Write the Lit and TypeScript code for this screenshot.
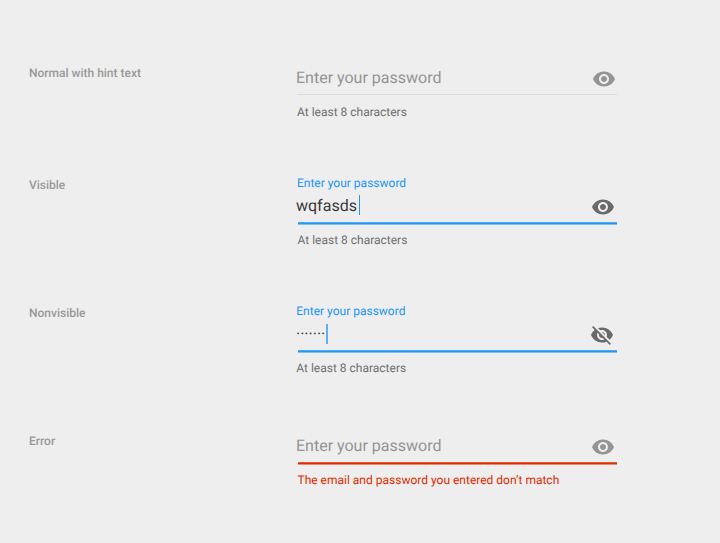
import { LitElement, html, css, svg, nothing } from "lit";
import { customElement, property } from "lit/decorators.js";
import { classMap } from "lit/directives/class-map.js";

const EYE = "M12 4.5C7 4.5 2.73 7.61 1 12c1.73 4.39 6 7.5 11 7.5s9.27-3.11 11-7.5c-1.73-4.39-6-7.5-11-7.5zM12 17c-2.76 0-5-2.24-5-5s2.24-5 5-5 5 2.24 5 5-2.24 5-5 5zm0-8c-1.66 0-3 1.34-3 3s1.34 3 3 3 3-1.34 3-3-1.34-3-3-3z";
const EYE_OFF = "M12 7c2.76 0 5 2.24 5 5 0 .65-.13 1.26-.36 1.83l2.92 2.92c1.51-1.26 2.7-2.89 3.43-4.75-1.73-4.39-6-7.5-11-7.5-1.4 0-2.74.25-3.98.7l2.16 2.16C10.74 7.13 11.35 7 12 7zM2 4.27l2.28 2.28.46.46C3.08 8.3 1.78 10.02 1 12c1.73 4.39 6 7.5 11 7.5 1.55 0 3.03-.3 4.38-.84l.42.42L19.73 22 21 20.73 3.27 3 2 4.27zM7.53 9.8l1.55 1.55c-.05.21-.08.43-.08.65 0 1.66 1.34 3 3 3 .22 0 .44-.03.65-.08l1.55 1.55c-.67.33-1.41.53-2.2.53-2.76 0-5-2.24-5-5 0-.79.2-1.53.53-2.2zm4.31-.78l3.15 3.15.02-.16c0-1.66-1.34-3-3-3l-.17.01z";

@customElement("password-field")
export class PasswordField extends LitElement {
  @property() variant = "normal";

  static styles = css`
    :host { display: block; }
    .field { width: 321px; color: #707070; text-rendering: geometricPrecision; }
    .label, .help { font-size: 12px; line-height: 16px; white-space: nowrap; padding-left: 1px; }
    .label { color: #2196f3; height: 17px; }
    .row { display: flex; justify-content: space-between; height: 30px; }
    .value { display: flex; font-size: 16px; line-height: 22px; padding-top: 3px; color: #949494; }
    .icon { width: 24px; height: 24px; fill: #949494; margin: 3px 1.5px 0 0; }
    .line { height: 1px; background: #d8d8d8; margin-left: 1px; }
    .help { margin-top: 9px; }
    .active .line, .error .line { height: 1px; margin-left: 2px; background: #2196f3; border: solid #7cc0f5; border-width: 1px 0; }
    .active .line { border-top-color: #4dabf5; }
    .active .value { color: #383838; }
    .active .icon { fill: #6a6a6a; margin-right: 2.5px; }
    .active .help, .error .help { margin-top: 7px; }
    .visible .help, .error .help { padding-left: 1.5px; }
    .masked .label, .masked .help { padding-left: 0.3px; }
    .masked .icon { margin-right: 3.3px; }
    .caret { width: 1px; height: 20px; background: #2196f3; margin: 0 0 0 2px; }
    .masked .caret { width: 2px; background: #5cb0f3; margin: 1px 0 0 1px; }
    .error .line { background: #dd2c00; border-color: #e45631 transparent #ea8a70; }
    .error .help { color: #dd2c00; }
    .error .icon { margin-right: 2.5px; }
  `;

  render() {
    const active = this.variant === "visible" || this.variant === "hidden";
    const value = this.variant === "visible" ? "wqfasds" : this.variant === "hidden" ? "·······" : "Enter your password";
    const help = this.variant === "error" ? "The email and password you entered don’t match" : "At least 8 characters";
    return html`
      <div class=${classMap({ field: true, active, visible: this.variant === "visible", error: this.variant === "error", masked: this.variant === "hidden" })}>
        ${active ? html`<div class="label">Enter your password</div>` : nothing}
        <div class="row">
          <div class="value"><span>${value}</span>${active ? html`<i class="caret"></i>` : nothing}</div>
          <svg class="icon" viewBox="0 0 24 24">${svg`<path d=${this.variant === "hidden" ? EYE_OFF : EYE} />`}</svg>
        </div>
        <div class="line"></div>
        <div class="help">${help}</div>
      </div>`;
  }
}

@customElement("app-root")
export class AppRoot extends LitElement {
  static styles = css`
    :host { display: grid; grid-template-rows: 111px 128px 129px 111px; height: 543px; box-sizing: border-box; background: #eee; font-family: Roboto, sans-serif; padding-top: 64px; overflow: hidden; }
    .state { display: grid; grid-template-columns: 267px 321px; padding-left: 29px; }
    .name { font-size: 12px; line-height: 16px; font-weight: 500; color: #999; padding-top: 2px; text-rendering: geometricPrecision; }
    .state:first-of-type .name, .state:last-of-type .name { padding-top: 1px; }
  `;

  render() {
    return html`${[["Normal with hint text", "normal"], ["Visible", "visible"], ["Nonvisible", "hidden"], ["Error", "error"]].map(
      ([name, variant]) => html`<section class="state"><div class="name">${name}</div><password-field variant=${variant}></password-field></section>`)}`;
  }
}
